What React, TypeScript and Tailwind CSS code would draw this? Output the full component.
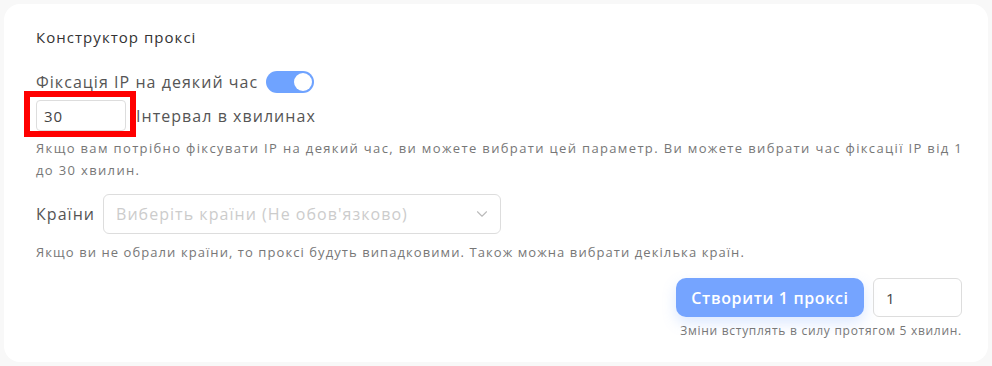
import { ChevronDown } from "lucide-react";

export default function App() {
    return (
        <div
            className="w-[992px] h-[366px] bg-[#f8f8f8] pt-[4px] pl-[4px] overflow-hidden tracking-[0.065em]"
            style={{ fontFamily: "'Open Sans', 'Noto Sans', sans-serif" }}
        >
            <div className="w-[984px] h-[358px] bg-white rounded-[16px] pl-[32px] pr-[26px] pt-[22px]">
                {/* заголовок */}
                <div className="text-[15px] leading-[22px] font-medium text-[#333]">
                    Конструктор проксі
                </div>

                {/* фіксація IP */}
                <div className="mt-[22px] flex items-center h-[24px]">
                    <span className="text-[16px] text-[#555]">Фіксація IP на деякий час</span>
                    <div className="ml-[8px] w-[48px] h-[22px] rounded-full bg-[#6fa3ff] flex items-center justify-end pr-[2px]">
                        <div className="w-[18px] h-[18px] rounded-full bg-white" />
                    </div>
                </div>

                <div className="mt-[6px] flex items-center">
                    <div className="relative">
                        <input
                            defaultValue="30"
                            className="w-[90px] h-[31px] border border-[#ddd] rounded-[4px] px-[7px] text-[15px] text-[#444] outline-none"
                        />
                        <div className="absolute -left-[12px] -right-[10px] -top-[9px] -bottom-[6px] border-[6px] border-[#ff0000]" />
                    </div>
                    <span className="ml-[10px] text-[16px] text-[#555]">Інтервал в хвилинах</span>
                </div>

                <p className="mt-[6px] whitespace-nowrap text-[13px] leading-[22px] tracking-[1.35px] text-[#777]">
                    Якщо вам потрібно фіксувати IP на деякий час, ви можете вибрати цей параметр. Ви можете вибрати час фіксації IP від 1
                    <br />
                    до 30 хвилин.
                </p>

                {/* країни */}
                <div className="mt-[13px] flex items-center">
                    <span className="text-[16px] text-[#555]">Країни</span>
                    <div className="ml-[8px] w-[398px] h-[40px] border border-[#ddd] rounded-[6px] flex items-center justify-between pl-[12px] pr-[9px]">
                        <span className="text-[16px] text-[#ccc]">Виберіть країни (Не обов'язково)</span>
                        <ChevronDown size={18} strokeWidth={1.5} className="text-[#bbb]" />
                    </div>
                </div>

                <p className="mt-[7px] text-[13px] leading-[22px] tracking-[1.07px] text-[#777]">
                    Якщо ви не обрали країни, то проксі будуть випадковими. Також можна вибрати декілька країн.
                </p>

                {/* кнопка */}
                <div className="mt-[15px] flex justify-end gap-[9px]">
                    <button className="w-[188px] h-[39px] rounded-[10px] bg-[#75a4ff] text-white text-[16px] font-semibold tracking-[0.04em] shadow-[0_6px_14px_rgba(117,164,255,0.25)]">
                        Створити 1 проксі
                    </button>
                    <input
                        defaultValue="1"
                        className="w-[89px] h-[39px] border border-[#ddd] rounded-[6px] px-[12px] text-[15px] text-[#444] outline-none"
                    />
                </div>
                <div className="mt-[6px] text-right text-[12px] leading-[16px] tracking-[0.06em] text-[#777]">
                    Зміни вступлять в силу протягом 5 хвилин.
                </div>
            </div>
        </div>
    );
}
